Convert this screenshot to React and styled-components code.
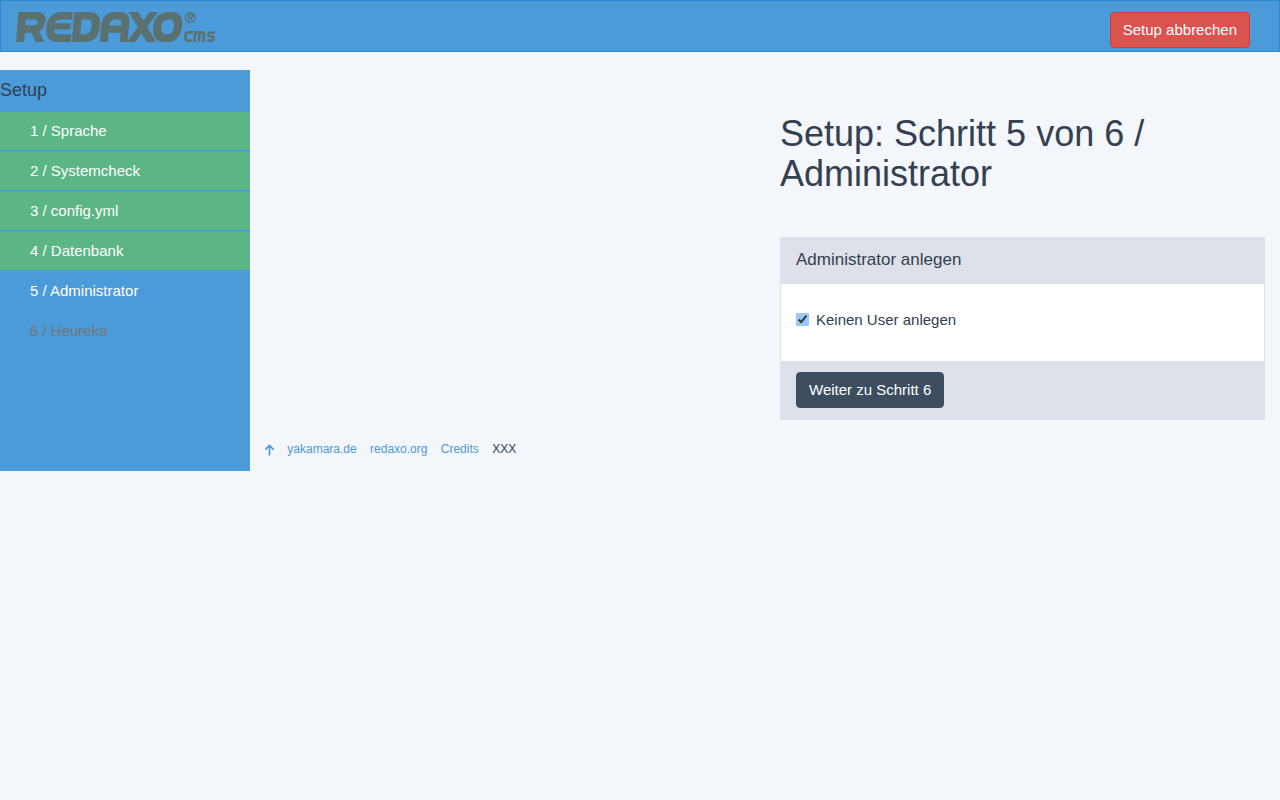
import React from 'react';
import styled, { createGlobalStyle } from 'styled-components';

const GlobalStyle = createGlobalStyle`
  *, *::before, *::after { box-sizing: border-box; }
  body {
    margin: 0;
    background: #f3f6fb;
    color: #324050;
    font-family: "Liberation Sans", Arial, sans-serif;
    font-size: 15px;
    line-height: 22px;
  }
`;

const Navbar = styled.header`
  display: flex;
  justify-content: space-between;
  align-items: flex-start;
  height: 52px;
  margin-bottom: 18px;
  padding: 11px 29px 0 15px;
  background: #4b9ad9;
  border: 1px solid #2d87d2;
`;

const Brand = styled.a`
  display: block;
  color: #5b7170;
  svg { display: block; }
`;

const Button = styled.button`
  display: inline-block;
  height: 36px;
  padding: 0 12px;
  border: 1px solid ${(p) => (p.$danger ? '#d23c38' : '#3c4d60')};
  border-radius: 4px;
  background: ${(p) => (p.$danger ? '#d9534f' : '#3c4d60')};
  color: #fff;
  font: inherit;
  cursor: pointer;
`;

const Page = styled.div`
  display: flex;
`;

const Sidebar = styled.nav`
  flex: 0 0 250px;
  background: #4b9ad9;
`;

const SidebarTitle = styled.h4`
  margin: 10px 0 12px;
  font-size: 18px;
  font-weight: 400;
  line-height: 20px;
`;

const Steps = styled.ul`
  display: flex;
  flex-direction: column;
  gap: 2px;
  margin: 0;
  padding: 0;
  list-style: none;
`;

const stepBackground = { done: '#5cb585', current: 'transparent', open: 'transparent' };

const Step = styled.li`
  padding: 8px 30px;
  background: ${(p) => stepBackground[p.$state]};
  color: ${(p) => (p.$state === 'open' ? '#777' : '#fff')};
`;

const Main = styled.div`
  flex: 1;
  min-width: 0;
`;

const Content = styled.main`
  margin-left: 50%;
  padding: 44px 15px 18px;
`;

const Title = styled.h1`
  margin: 0 0 43px;
  font-size: 36px;
  font-weight: 400;
  line-height: 40px;
`;

const Panel = styled.form`
  background: #fff;
  border: 1px solid #dee1e9;
`;

const PanelHeader = styled.h2`
  margin: 0;
  padding: 10px 15px 12px;
  background: #dee1e9;
  font-size: 17px;
  font-weight: 400;
  line-height: 24px;
`;

const PanelBody = styled.div`
  padding: 25px 15px 30px;
`;

const CheckLabel = styled.label`
  display: flex;
  align-items: flex-start;
  gap: 7px;
`;

const Checkbox = styled.input`
  width: 13px;
  height: 13px;
  margin: 4px 0 0;
  accent-color: #99c8ff;
`;

const PanelFooter = styled.div`
  display: flex;
  padding: 11px 15px;
  background: #dee1e9;
`;

const Footer = styled.footer`
  padding: 0 10px 11px;
  font-size: 12px;
`;

const FooterItem = styled.span`
  padding: 0 5px;
`;

const FooterLink = styled.a`
  color: #4b9ad9;
  text-decoration: none;
  svg { display: inline-block; vertical-align: middle; }
`;

const steps = [
  ['1 / Sprache', 'done'],
  ['2 / Systemcheck', 'done'],
  ['3 / config.yml', 'done'],
  ['4 / Datenbank', 'done'],
  ['5 / Administrator', 'current'],
  ['6 / Heureka', 'open'],
];

function Logo() {
  return (
    <svg width="200" height="30" viewBox="0 0 200 30" fill="currentColor" fillRule="evenodd" role="img" aria-label="Redaxo CMS">
      <path d="M2.3 0H21Q29.8 0 29.4 8Q29 16.8 23.2 19.4L28 30H19.6L15.4 20.8H8.8L8 30H0ZM9.8 7.6L9.3 13.2H18.4Q21.2 13.2 21.5 10.4Q21.7 7.6 19 7.6Z" />
      <path d="M57 0L56.4 7.6H44Q39.8 7.6 38.6 11.2H54.8L54.2 17.6H38Q38.2 22.2 42 22.2H55.2L54.6 30H42Q29.8 30 30.2 17.5Q31.2 0 46 0Z" />
      <path d="M58.3 0H72Q85 0 84.2 12.5Q83 30 68.5 30H55.8ZM65.6 7.6L64.4 22.2H69Q75.2 22.2 75.8 13Q76 7.6 71.5 7.6Z" />
      <path d="M83.8 30L85.2 14Q86.4 0 99.5 0H103.5Q114 0 113.2 10L111.6 30H103.8L104.6 20.8H92.6L91.8 30ZM93.2 13.4H105.1L105.3 11Q105.6 7.6 102 7.6H99.4Q94 7.6 93.2 13.4Z" />
      <path d="M112.5 0H122L127.4 8.6L133.6 0H142L131.2 14.8L139.8 30H130.6L125.4 21.2L119.2 30H110.8L121.8 15Z" />
      <path d="M153.5 0H155.5Q167 0 166.2 13Q165.1 30 151 30H149Q136 30 137 16Q138 0 153.5 0ZM153 7.6Q146 7.6 145.3 15Q144.8 22.2 149.6 22.2H151.4Q157.4 22.2 158 14Q158.5 7.6 154.4 7.6Z" />
      <g fill="none" stroke="currentColor">
        <circle cx="174.3" cy="5.5" r="4.9" strokeWidth="1.3" />
        <path d="M172.5 8.6L173.1 2.6H175.2Q176.8 2.6 176.6 4.2Q176.4 5.8 174.9 5.8H173M174.8 5.8L176 8.6" strokeWidth="1.4" />
        <path d="M176.6 20.4H172.6Q169.6 20.4 169.2 24.5Q168.9 28.6 171.8 28.6H175.8" strokeWidth="2.8" />
        <path d="M178.3 30L179.2 20.4H185.8Q188.2 20.4 188 22.8L187.3 30M183.6 20.4L182.8 30" strokeWidth="2.7" />
        <path d="M198.8 20.4H194.4Q192.4 20.4 192.3 22.4Q192.2 24.5 194.2 24.5H195.8Q197.8 24.5 197.5 26.6Q197.3 28.6 195.3 28.6H190.6" strokeWidth="2.5" />
      </g>
    </svg>
  );
}

export default function App() {
  return (
    <>
      <GlobalStyle />
      <Navbar>
        <Brand href="#"><Logo /></Brand>
        <Button type="button" $danger>Setup abbrechen</Button>
      </Navbar>
      <Page>
        <Sidebar>
          <SidebarTitle>Setup</SidebarTitle>
          <Steps>
            {steps.map(([label, state]) => (
              <Step key={label} $state={state}>{label}</Step>
            ))}
          </Steps>
        </Sidebar>
        <Main>
          <Content>
            <Title>Setup: Schritt 5 von 6 / Administrator</Title>
            <Panel onSubmit={(e) => e.preventDefault()}>
              <PanelHeader>Administrator anlegen</PanelHeader>
              <PanelBody>
                <CheckLabel htmlFor="no-user">
                  <Checkbox id="no-user" type="checkbox" defaultChecked />
                  Keinen User anlegen
                </CheckLabel>
              </PanelBody>
              <PanelFooter>
                <Button type="submit">Weiter zu Schritt 6</Button>
              </PanelFooter>
            </Panel>
          </Content>
          <Footer>
            <FooterItem>
              <FooterLink href="#" aria-label="Nach oben">
                <svg width="9" height="12" viewBox="0 0 9 12" fill="none" stroke="currentColor" strokeWidth="1.7">
                  <path d="M4.5 11.5V1.8M0.4 5.6L4.5 1.5L8.6 5.6" />
                </svg>
              </FooterLink>
            </FooterItem>{' '}
            <FooterItem><FooterLink href="#">yakamara.de</FooterLink></FooterItem>{' '}
            <FooterItem><FooterLink href="#">redaxo.org</FooterLink></FooterItem>{' '}
            <FooterItem><FooterLink href="#">Credits</FooterLink></FooterItem>{' '}
            <FooterItem>XXX</FooterItem>
          </Footer>
        </Main>
      </Page>
    </>
  );
}
